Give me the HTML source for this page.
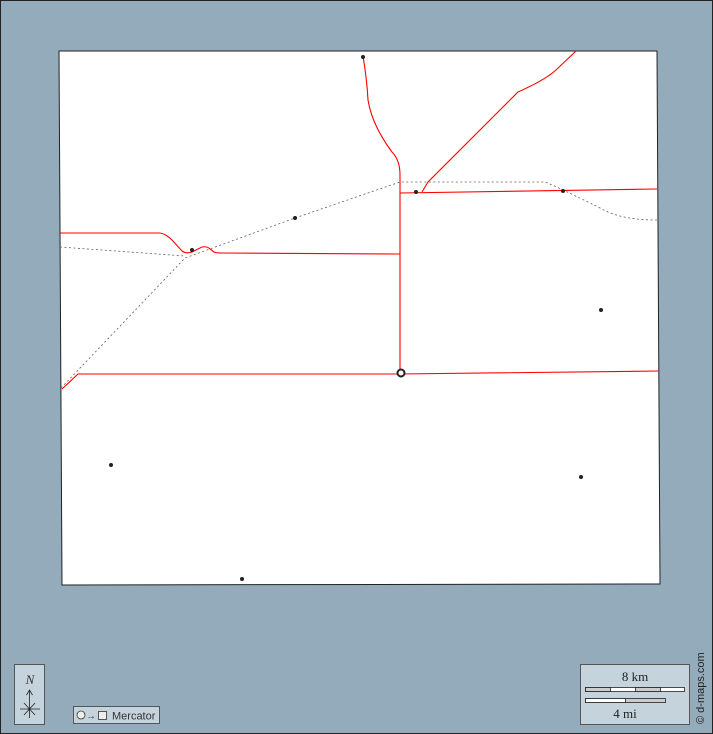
<!DOCTYPE html>
<html><head><style>
html,body{margin:0;padding:0;}
body{width:713px;height:734px;overflow:hidden;background:#94abbb;font-family:"Liberation Serif",serif;}
</style></head><body>
<svg width="713" height="734" viewBox="0 0 713 734" style="position:absolute;left:0;top:0">
<rect x="0.5" y="0.5" width="712" height="733" fill="#94abbb" stroke="#222" stroke-width="1"/>
<polygon points="59,51 657,51 660,584 62,585" fill="#fff" stroke="#222" stroke-width="1"/>
<g fill="none" stroke="#6b5f57" stroke-width="0.8" stroke-dasharray="2,2.5">
<path d="M61,388 L185,258 L295,218 L400,182 L545,182 Q560,188 600,208 Q620,220 657,220"/>
<path d="M60,247 L185,256"/>
</g>
<g fill="none" stroke="#ff0000" stroke-width="1.1">
<path d="M363,56 Q367,80 368,100 Q372,125 392,152 Q400,160 400,175 L400,373"/>
<path d="M422,192 L428,182 L518,92 Q545,80 556,70 L576,51"/>
<path d="M400,193 L657,189"/>
<path d="M60,233 L160,233 Q166,234 172,240 L182,251 Q186,254 192,252 L202,247 Q207,246 210,249 L214,252 Q216,253 222,253 L400,254"/>
<path d="M62,389 L78,374 L400,374 L659,371"/>
</g>
<g fill="#222">
<circle cx="363" cy="57" r="2"/>
<circle cx="416" cy="192" r="2"/>
<circle cx="563" cy="191" r="2"/>
<circle cx="295" cy="218" r="2"/>
<circle cx="192" cy="250" r="2"/>
<circle cx="601" cy="310" r="2"/>
<circle cx="111" cy="465" r="2"/>
<circle cx="581" cy="477" r="2"/>
<circle cx="242" cy="579" r="2"/>
</g>
<circle cx="401" cy="373" r="3.5" fill="#fff" stroke="#222" stroke-width="2"/>
<!-- compass -->
<rect x="14.5" y="664.5" width="30" height="60" fill="#c4d3dc" stroke="#555"/>
<text x="30" y="684" font-size="13" font-style="italic" text-anchor="middle" fill="#333">N</text>
<path d="M29.5,690 L29.5,718 M26.5,695 L29.5,690 L32.5,695 M20,709 L40,709 M24,703 L35,715 M35,703 L24,715" stroke="#222" stroke-width="0.8" fill="none"/>
<!-- projection -->
<rect x="73.5" y="706.5" width="86" height="17" fill="#c4d3dc" stroke="#555"/>
<circle cx="81" cy="715" r="4" fill="#eee" stroke="#333" stroke-width="0.8"/>
<text x="86" y="719" font-family="Liberation Sans,sans-serif" font-size="10" fill="#333">→</text>
<rect x="98.5" y="711.5" width="8" height="8" fill="#eee" stroke="#333" stroke-width="0.8"/>
<text x="112" y="719.5" font-family="Liberation Sans,sans-serif" font-size="11" fill="#333">Mercator</text>
<!-- scale -->
<rect x="580.5" y="664.5" width="109" height="60" fill="#c4d3dc" stroke="#555"/>
<text x="635" y="681" font-size="13" text-anchor="middle" fill="#222">8 km</text>
<rect x="585.5" y="687.5" width="99" height="4" fill="#fff" stroke="#222" stroke-width="0.8"/>
<rect x="585.5" y="687.5" width="25" height="4" fill="#ccc" stroke="#222" stroke-width="0.8"/>
<rect x="635.5" y="687.5" width="25" height="4" fill="#ccc" stroke="#222" stroke-width="0.8"/>
<rect x="585.5" y="698.5" width="80" height="4" fill="#ccc" stroke="#222" stroke-width="0.8"/>
<rect x="585.5" y="698.5" width="40" height="4" fill="#fff" stroke="#222" stroke-width="0.8"/>
<text x="625" y="718" font-size="13" text-anchor="middle" fill="#222">4 mi</text>
<text transform="translate(704,724) rotate(-90)" font-family="Liberation Sans,sans-serif" font-size="11" fill="#222">© d-maps.com</text>
</svg>
</body></html>
